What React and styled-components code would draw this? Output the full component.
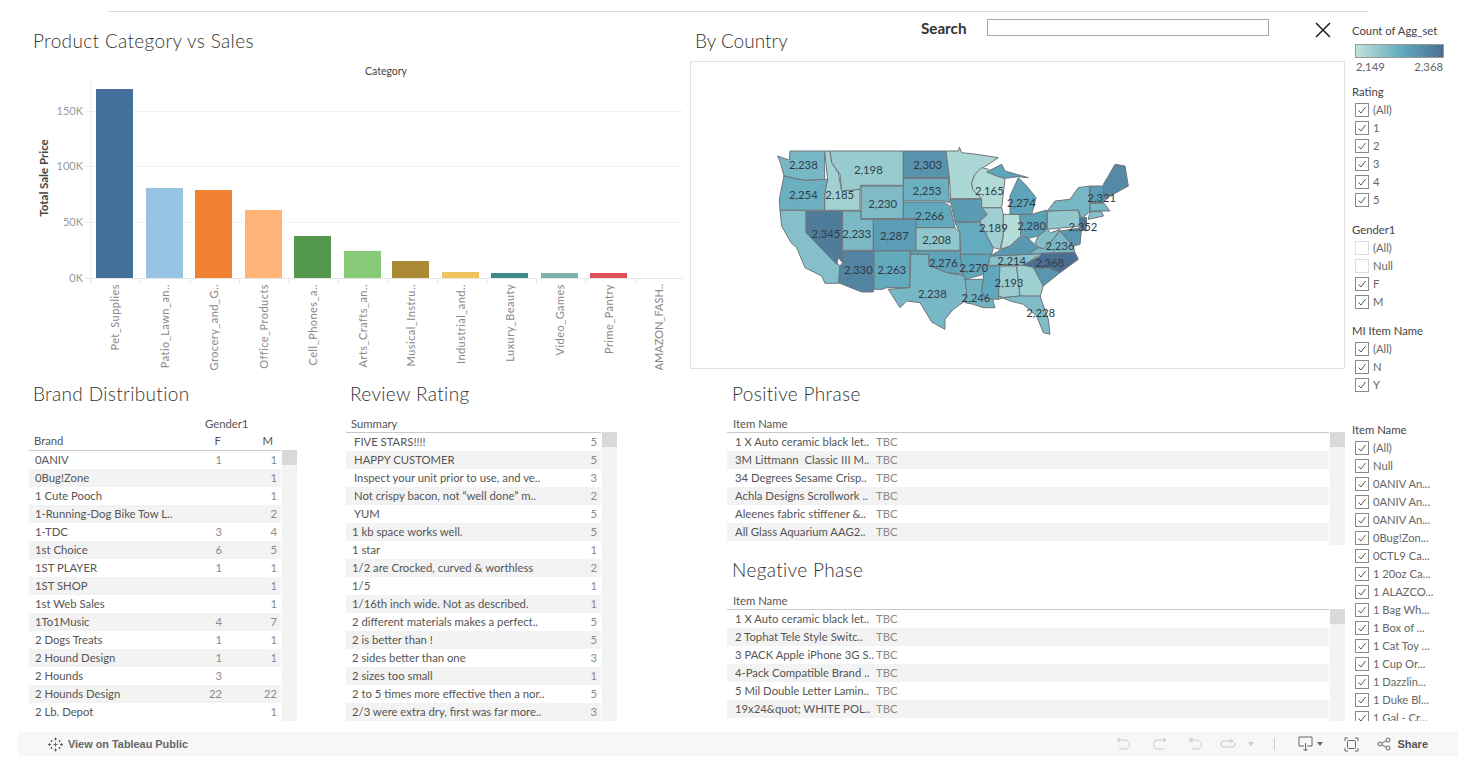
import React from 'react';
import styled, { createGlobalStyle } from 'styled-components';

const GlobalStyle = createGlobalStyle`
  html, body {
    margin: 0;
    padding: 0;
    background: #fff;
    overflow: hidden;
  }
  * { box-sizing: border-box; }
`;

const FONT = `Lato, "Open Sans", sans-serif`;

// page frame
const Page = styled.div`
  width: 1470px;
  height: 778px;
  padding-top: 11px;
  font-family: ${FONT};
  color: #555;
`;

const TopRule = styled.div`
  width: 1260px;
  height: 1px;
  margin-left: 108px;
  background: #dcdcdc;
`;

const Body = styled.div`
  display: flex;
  height: 709px;
`;

const Dashboard = styled.div`
  width: 1345px;
  display: flex;
  flex-direction: column;
`;

const TopRow = styled.div`
  display: flex;
  height: 368px;
`;

const BottomRow = styled.div`
  display: flex;
  height: 341px;
  padding-top: 1px;
  padding-left: 29px;
`;

// titles
const Title = styled.h2`
  margin: 0;
  padding-left: ${p => p.$indent || 0}px;
  font-size: 19px;
  line-height: 26px;
  font-weight: 300;
  letter-spacing: ${p => (p.$tight ? '0' : '0.35px')};
  color: #333;
  white-space: nowrap;
`;

// bar chart
const ChartPanel = styled.section`
  width: 690px;
  padding: 16px 0 0 33px;
`;

const ChartSvg = styled.svg`
  display: block;
  margin: 6px 0 0 -33px;
`;

const AxisTitle = styled.text`
  font-size: ${p => (p.$bold ? 11.5 : 10.5)}px;
  fill: #444;
  font-weight: ${p => (p.$bold ? 700 : 400)};
`;

const AxisTick = styled.text`
  font-size: 11px;
  fill: #999;
`;

const CategoryTick = styled.text`
  font-size: 11px;
  fill: #888;
  letter-spacing: ${p => (p.$tight ? '0' : '0.45px')};
`;

// map
const MapPanel = styled.section`
  width: 655px;
  display: flex;
  flex-direction: column;
`;

const MapHeader = styled.div`
  display: flex;
  height: 49px;
`;

const CountryHeading = styled.div`
  width: 231px;
  padding: 16px 0 0 5px;
`;

const SearchLabel = styled.label`
  width: 66px;
  margin-top: 8px;
  font-size: 15.2px;
  line-height: 17px;
  font-weight: 700;
  color: #333;
`;

const SearchInput = styled.div`
  width: 282px;
  height: 17px;
  margin-top: 7px;
  border: 1px solid #a8a8a8;
  background: #fff;
`;

const CloseButton = styled.button`
  display: flex;
  width: 16px;
  height: 16px;
  margin: 10px 0 0 46px;
  padding: 0;
  border: 0;
  background: none;
`;

const MapBox = styled.div`
  width: 655px;
  height: 308px;
  border: 1px solid #e2e2e2;
`;

const MapSvg = styled.svg`
  display: block;
  width: 100%;
  height: 100%;
`;

const StateShape = styled.polygon`
  stroke: #6e7478;
  stroke-width: 3;
  stroke-linejoin: round;
`;

const StateValue = styled.text`
  font-size: 34px;
  fill: #2f3b45;
  text-anchor: middle;
  dominant-baseline: central;
`;

// tables
const TablePanel = styled.section`
  width: ${p => p.$width}px;
  margin-left: ${p => p.$left || 0}px;
  flex: none;
`;

const HeaderBlock = styled.div`
  padding-top: ${p => p.$top || 9}px;
  font-size: 11.3px;
  line-height: 16px;
  color: #555;
`;

const HeaderRow = styled.div`
  display: flex;
  height: ${p => p.$height || 16}px;
  padding-left: ${p => p.$indent || 5}px;
  padding-top: ${p => p.$top || 0}px;
`;

const HeadName = styled.span`
  flex: 1;
`;

const HeadNum = styled.span`
  width: ${p => p.$width}px;
  text-align: ${p => p.$align || 'right'};
`;

const TableBody = styled.div`
  display: flex;
  height: ${p => p.$height}px;
`;

const RowList = styled.div`
  flex: 1;
  border-top: 1px solid #c9c9c9;
  margin-right: 1px;
`;

const Row = styled.div`
  display: flex;
  align-items: center;
  height: 18px;
  padding-left: ${p => p.$indent || 6}px;
  padding-bottom: 2px;
  font-size: 11.3px;
  color: #555;
  background: ${p => (p.$striped ? '#f3f3f3' : '#fff')};
  white-space: pre;
`;

const Name = styled.span`
  flex: ${p => (p.$width ? 'none' : 1)};
  width: ${p => (p.$width ? `${p.$width}px` : 'auto')};
`;

const Num = styled.span`
  width: ${p => p.$width}px;
  text-align: right;
  color: #8a8a8a;
`;

const Scrollbar = styled.div`
  width: 15px;
  height: 100%;
  flex: none;
  background: #f3f3f3;
`;

const ScrollThumb = styled.div`
  height: 15px;
  background: #d9d9d9;
`;

const PhraseBlock = styled.div`
  height: ${p => p.$height}px;
`;

// filters on the right
const Sidebar = styled.aside`
  width: 125px;
  padding: 11px 0 0 7px;
  overflow: hidden;
`;

const FilterTitle = styled.div`
  margin-top: ${p => p.$top || 0}px;
  margin-bottom: ${p => p.$bottom ?? 1}px;
  font-size: 11.3px;
  line-height: 16px;
  color: #444;
  white-space: nowrap;
`;

const LegendBar = styled.div`
  width: 89px;
  height: 14px;
  margin: 5px 0 0 3px;
  border: 1px solid #9a9a90;
  background: linear-gradient(to right, #bfe3dc, #5fa7bd 55%, #4b6f92);
`;

const LegendScale = styled.div`
  display: flex;
  justify-content: space-between;
  width: 89px;
  margin-left: 3px;
  padding: 0 1px;
  font-size: 11.3px;
  line-height: 17px;
  color: #666;
`;

const FilterList = styled.div`
  height: ${p => (p.$height ? `${p.$height}px` : 'auto')};
  overflow: hidden;
`;

const FilterRow = styled.div`
  display: flex;
  align-items: center;
  height: 18px;
  padding-left: 3px;
  padding-bottom: 1px;
  font-size: 11.2px;
  color: #666;
  white-space: nowrap;
`;

const Checkbox = styled.span`
  display: flex;
  width: 14px;
  height: 14px;
  margin-right: 4px;
  flex: none;
  border: 1px solid ${p => (p.$on ? '#8a8a8a' : '#dedede')};
  background: #fff;
`;

// bottom toolbar
const Toolbar = styled.footer`
  display: flex;
  align-items: center;
  width: 1440px;
  height: 24px;
  margin: 11px 0 0 18px;
  padding-left: 30px;
  background: #f7f7f7;
  font-family: "Liberation Sans", Arial, sans-serif;
  font-size: 11px;
  color: #555;
`;

const ToolbarLink = styled.span`
  margin-left: 5px;
  font-size: 10.9px;
  font-weight: 700;
  color: #666;
  white-space: nowrap;
`;

const ToolGroup = styled.div`
  display: flex;
  align-items: center;
  margin-left: auto;
  padding-right: 30px;
`;

const ToolIcon = styled.svg`
  display: block;
  flex: none;
  margin-left: ${p => p.$left || 0}px;
  fill: none;
  stroke: ${p => (p.$off ? '#c9c9c9' : '#666')};
  stroke-width: 1;
`;

const Caret = styled.span`
  width: 0;
  height: 0;
  margin-left: ${p => p.$left || 0}px;
  border-left: 3.5px solid transparent;
  border-right: 3.5px solid transparent;
  border-top: 4px solid ${p => (p.$off ? '#c9c9c9' : '#666')};
`;

const ToolDivider = styled.span`
  width: 1px;
  height: 12px;
  margin-left: 20px;
  background: #c9c9c9;
`;

const ShareLabel = styled.span`
  margin-left: 6px;
  font-weight: 700;
`;

// data
const BARS = [
  ['Pet_Supplies', 96, 89, '#456f9b'],
  ['Patio_Lawn_an..', 146, 188, '#97c4e3'],
  ['Grocery_and_G..', 195, 190, '#f08133'],
  ['Office_Products', 245, 210, '#ffb477'],
  ['Cell_Phones_a..', 294, 236, '#54984d'],
  ['Arts_Crafts_an..', 344, 251, '#87ca78'],
  ['Musical_Instru..', 392, 261, '#ab8a35'],
  ['Industrial_and..', 442, 272, '#f1c35f'],
  ['Luxury_Beauty', 491, 273, '#3f8a87'],
  ['Video_Games', 541, 273, '#7bb3ac'],
  ['Prime_Pantry', 590, 273, '#e0505a'],
  ['AMAZON_FASH..', 640, 278, 'none'],
];

const Y_TICKS = [['150K', 111], ['100K', 166], ['50K', 222], ['0K', 278]];

const STATES = [
  [2238, '263,470 285,478 298,482 300,455 404,455 404,540 345,543 310,537 282,530 272,492'],
  [2254, '282,530 310,537 345,543 413,540 405,580 404,633 270,633 268,600'],
  [2222, '270,633 348,633 348,700 450,800 450,845 445,852 405,852 395,830 345,805 320,745 303,730 275,680'],
  [2345, '348,635 458,635 458,790 445,775 440,795 348,700'],
  [2185, '404,455 420,455 425,490 445,520 450,550 455,575 510,570 510,633 404,633 405,580 413,540'],
  [2198, '420,455 640,455 640,558 512,558 510,570 455,575 450,525 425,490'],
  [2230, '513,560 640,560 640,658 513,658'],
  [2233, '458,635 512,635 513,660 550,660 550,753 458,753'],
  [2287, '550,660 678,660 678,755 550,755'],
  [2330, '458,755 550,755 550,878 515,878 445,850 450,800 458,790'],
  [2263, '552,755 660,755 660,865 590,865 578,870 552,870'],
  [2303, '640,455 768,455 778,535 640,535'],
  [2253, '640,537 775,537 778,610 760,605 640,605'],
  [2266, '640,608 760,608 780,620 795,685 678,685 678,658 640,658'],
  [2208, '678,685 795,685 810,700 810,753 678,753'],
  [2276, '662,755 812,755 820,825 770,820 716,798 716,765 662,765'],
  [2238, '662,765 716,765 716,798 770,820 825,830 830,880 825,905 790,930 765,960 765,990 725,968 690,910 650,905 630,925 595,870 660,865'],
  [2175, '768,455 805,455 808,443 815,460 860,465 925,475 880,505 855,525 845,550 848,570 875,598 782,598 778,535'],
  [2290, '780,600 875,600 893,640 870,668 795,668'],
  [2262, '795,670 870,668 880,690 910,745 905,765 812,765 810,700'],
  [2270, '810,765 905,765 882,825 825,840 820,825'],
  [2246, '825,840 880,840 875,875 885,898 905,890 915,925 880,925 850,915 825,910 830,880'],
  [2268, '882,800 930,800 925,900 885,898 875,875 880,840'],
  [2193, '930,800 980,800 990,890 940,895 925,900'],
  [2190, '980,798 1032,798 1060,860 1050,893 990,890'],
  [2228, '925,890 940,895 990,890 1050,890 1075,960 1080,1005 1060,1000 1040,950 1000,915 960,905'],
  [2214, '900,770 1015,765 1055,762 1000,798 895,798'],
  [2295, '932,752 960,740 992,710 1015,717 1045,745 1015,765 900,770'],
  [2189, '875,625 935,625 940,645 940,710 930,750 910,745 880,690 870,665 892,645'],
  [2160, '940,645 990,645 992,710 960,740 932,750 940,710'],
  [2165, '855,525 875,505 895,510 945,540 935,625 875,625 875,598 848,570 845,550'],
  [2274, '890,518 935,495 945,515 1015,535 985,532 945,537 920,530'],
  [2274, '960,625 960,590 985,535 1010,560 1038,595 1025,645 960,645'],
  [2280, '990,645 1025,645 1070,632 1072,690 1045,710 1015,717 992,705'],
  [2225, '1045,745 1035,730 1045,710 1072,690 1082,700 1110,690 1090,720 1060,748'],
  [2236, '1015,765 1045,745 1060,748 1090,720 1110,695 1150,740 1155,760 1055,762'],
  [2205, '1072,635 1165,632 1175,680 1072,690'],
  [2240, '1072,635 1095,605 1140,600 1165,565 1198,560 1200,635 1175,660 1165,632'],
  [2352, '1168,655 1190,655 1188,695 1170,690'],
  [2300, '1110,695 1175,685 1170,735 1150,740'],
  [2290, '1200,560 1240,560 1242,610 1200,610'],
  [2240, '1200,612 1242,612 1260,635 1200,635'],
  [2220, '1200,637 1235,637 1240,650 1195,660'],
  [2321, '1242,600 1240,555 1255,530 1275,495 1305,500 1315,560 1260,590'],
  [2300, '1030,805 1075,805 1110,820 1060,860'],
  [2368, '1000,798 1050,770 1055,762 1155,760 1165,780 1110,820 1075,805 1035,805'],
];

const STATE_LABELS = [
  ['2,238', 340, 495], ['2,198', 535, 510], ['2,303', 713, 495], ['2,254', 340, 587],
  ['2,185', 449, 585], ['2,253', 711, 573], ['2,165', 898, 573], ['2,230', 578, 612],
  ['2,266', 719, 650], ['2,274', 994, 609], ['2,321', 1235, 596], ['2,280', 1025, 679],
  ['2,189', 910, 684], ['2,352', 1179, 681], ['2,345', 408, 703], ['2,233', 500, 703],
  ['2,287', 613, 708], ['2,208', 740, 720], ['2,236', 1110, 738], ['2,276', 760, 790],
  ['2,214', 965, 785], ['2,368', 1079, 790], ['2,330', 505, 811], ['2,263', 605, 811],
  ['2,270', 851, 806], ['2,193', 957, 849], ['2,238', 727, 882], ['2,246', 858, 895],
  ['2,228', 1052, 941],
];

const BRANDS = [
  ['0ANIV', 1, 1], ['0Bug!Zone', '', 1], ['1 Cute Pooch', '', 1], ['1-Running-Dog Bike Tow L..', '', 2],
  ['1-TDC', 3, 4], ['1st Choice', 6, 5], ['1ST PLAYER', 1, 1], ['1ST SHOP', '', 1],
  ['1st Web Sales', '', 1], ['1To1Music', 4, 7], ['2 Dogs Treats', 1, 1], ['2 Hound Design', 1, 1],
  ['2 Hounds', 3, ''], ['2 Hounds Design', 22, 22], ['2 Lb. Depot', '', 1],
];

const REVIEWS = [
  ['FIVE STARS!!!!', 5, 8], ['HAPPY CUSTOMER', 5, 8], ['Inspect your unit prior to use, and ve..', 3, 8],
  ['Not crispy bacon, not \u201Cwell done\u201D m..', 2, 8], ['YUM', 5, 8], ['1 kb space works well.', 5],
  ['1 star', 1], ['1/2 are Crocked, curved & worthless', 2], ['1/5', 1],
  ['1/16th inch wide. Not as described.', 1], ['2 different materials makes a perfect..', 5],
  ['2 is better than !', 5], ['2 sides better than one', 3], ['2 sizes too small', 1],
  ['2 to 5 times more effective then a nor..', 5], ['2/3 were extra dry, first was far more..', 3],
];

const POSITIVE = [
  '1 X Auto ceramic black let..', '3M Littmann  Classic III M..', '34 Degrees Sesame Crisp..',
  'Achla Designs Scrollwork ..', 'Aleenes fabric stiffener &..', 'All Glass Aquarium AAG2..',
];

const NEGATIVE = [
  '1 X Auto ceramic black let..', '2 Tophat Tele Style Switc..', '3 PACK Apple iPhone 3G S..',
  '4-Pack Compatible Brand ..', '5 Mil Double Letter Lamin..', '19x24&quot; WHITE POL..',
];

const FILTERS = [
  { title: 'Rating', top: 9, items: ['(All)', '1', '2', '3', '4', '5'] },
  { title: 'Gender1', top: 13, items: ['(All)', 'Null', 'F', 'M'], off: ['(All)', 'Null'] },
  { title: 'MI Item Name', top: 12, items: ['(All)', 'N', 'Y'] },
  {
    title: 'Item Name',
    top: 28,
    height: 282,
    items: ['(All)', 'Null', '0ANIV An...', '0ANIV An...', '0ANIV An...', '0Bug!Zon...', '0CTL9 Ca...',
      '1 20oz Ca...', '1 ALAZCO...', '1 Bag Wh...', '1 Box of ...', '1 Cat Toy ...', '1 Cup Or...',
      '1 Dazzlin...', '1 Duke Bl...', '1 Gal - Cr...'],
  },
];

// legend colour for a count
const STOPS = [[191, 227, 220], [95, 167, 189], [75, 111, 146]];
const shade = v => {
  const t = (v - 2149) / (2368 - 2149);
  const [a, b, k] = t < 0.55 ? [STOPS[0], STOPS[1], t / 0.55] : [STOPS[1], STOPS[2], (t - 0.55) / 0.45];
  const c = a.map((n, i) => Math.round(n + (b[i] - n) * k));
  return `rgb(${c.join(',')})`;
};

const BarChart = () => (
  <ChartSvg width="690" height="310" viewBox="0 60 690 310">
    <AxisTitle x="386" y="75" textAnchor="middle">Category</AxisTitle>
    <AxisTitle $bold x="0" y="0" textAnchor="middle" transform="translate(48 178) rotate(-90)">Total Sale Price</AxisTitle>
    <line x1="91" x2="91" y1="79" y2="283" stroke="#ececec" />
    {Y_TICKS.map(([label, y]) => (
      <g key={label}>
        <line x1="85" x2="683" y1={y + 0.5} y2={y + 0.5} stroke={y === 278 ? '#e6e6e6' : '#f1f1f1'} />
        <AxisTick x="83" y={y + 4} textAnchor="end">{label}</AxisTick>
      </g>
    ))}
    {BARS.map(([label, x, top, color], i) => (
      <g key={label}>
        <line x1={91 + i * 49.5} x2={91 + i * 49.5} y1="278" y2="283" stroke="#e6e6e6" />
        {color !== 'none' && <rect x={x} y={top} width="37" height={278 - top} fill={color} />}
        <CategoryTick
          $tight={color === 'none'}
          textAnchor="end"
          transform={`translate(${x + 23} 284) rotate(-90)`}
        >
          {label}
        </CategoryTick>
      </g>
    ))}
  </ChartSvg>
);

const UsMap = () => (
  <MapSvg viewBox="3 188 1959 918" preserveAspectRatio="none">
    {STATES.map(([value, points], i) => (
      <StateShape key={i} points={points} fill={shade(value)} />
    ))}
    {STATE_LABELS.map(([label, x, y], i) => (
      <StateValue key={i} x={x} y={y}>{label}</StateValue>
    ))}
  </MapSvg>
);

const Check = () => (
  <svg width="12" height="12" viewBox="0 0 12 12" fill="none" stroke="#555" strokeWidth="1">
    <path d="M2.5 6.5 L5 9 L9.5 3" />
  </svg>
);

const Filter = ({ title, top, items, off = [], height }) => (
  <>
    <FilterTitle $top={top}>{title}</FilterTitle>
    <FilterList $height={height}>
      {items.map((item, i) => {
        const on = !off.includes(item);
        return (
          <FilterRow key={i}>
            <Checkbox $on={on}>{on && <Check />}</Checkbox>
            {item}
          </FilterRow>
        );
      })}
    </FilterList>
  </>
);

const ScrollTrack = () => (
  <Scrollbar>
    <ScrollThumb />
  </Scrollbar>
);

const PhraseTable = ({ title, rows, top, bodyHeight, blockHeight }) => (
  <PhraseBlock $height={blockHeight}>
    <Title $indent={5}>{title}</Title>
    <HeaderBlock $top={top}>
      <HeaderRow $indent={6}>Item Name</HeaderRow>
    </HeaderBlock>
    <TableBody $height={bodyHeight}>
      <RowList>
        {rows.map((name, i) => (
          <Row key={i} $striped={i % 2 === 1} $indent={8}>
            <Name $width={141}>{name}</Name>
            <Num $width={20}>TBC</Num>
          </Row>
        ))}
      </RowList>
      <ScrollTrack />
    </TableBody>
  </PhraseBlock>
);

export default function App() {
  return (
    <Page>
      <GlobalStyle />
      <TopRule />
      <Body>
        <Dashboard>
          <TopRow>
            <ChartPanel>
              <Title>Product Category vs Sales</Title>
              <BarChart />
            </ChartPanel>
            <MapPanel>
              <MapHeader>
                <CountryHeading>
                  <Title $tight>By Country</Title>
                </CountryHeading>
                <SearchLabel>Search</SearchLabel>
                <SearchInput />
                <CloseButton aria-label="Close">
                  <svg width="16" height="16" viewBox="0 0 16 16" stroke="#222" strokeWidth="1.5">
                    <path d="M1 1 L15 15 M15 1 L1 15" />
                  </svg>
                </CloseButton>
              </MapHeader>
              <MapBox>
                <UsMap />
              </MapBox>
            </MapPanel>
          </TopRow>
          <BottomRow>
            <TablePanel $width={268}>
              <Title $indent={4}>Brand Distribution</Title>
              <HeaderBlock>
                <HeaderRow>
                  <HeadName />
                  <HeadNum $width={55} $align="left">Gender1</HeadNum>
                  <HeadNum $width={37} />
                </HeaderRow>
                <HeaderRow $height={18} $top={1}>
                  <HeadName>Brand</HeadName>
                  <HeadNum $width={20}>F</HeadNum>
                  <HeadNum $width={52}>M</HeadNum>
                  <HeadNum $width={24} />
                </HeaderRow>
              </HeaderBlock>
              <TableBody $height={271}>
                <RowList>
                  {BRANDS.map(([name, f, m], i) => (
                    <Row key={i} $striped={i % 2 === 1}>
                      <Name>{name}</Name>
                      <Num $width={20}>{f}</Num>
                      <Num $width={55}>{m}</Num>
                      <Num $width={4} />
                    </Row>
                  ))}
                </RowList>
                <ScrollTrack />
              </TableBody>
            </TablePanel>
            <TablePanel $width={271} $left={49}>
              <Title $indent={4}>Review Rating</Title>
              <HeaderBlock>
                <HeaderRow>Summary</HeaderRow>
              </HeaderBlock>
              <TableBody $height={289}>
                <RowList>
                  {REVIEWS.map(([name, score, indent], i) => (
                    <Row key={i} $striped={i % 2 === 1} $indent={indent}>
                      <Name>{name}</Name>
                      <Num $width={20}>{score}</Num>
                      <Num $width={4} />
                    </Row>
                  ))}
                </RowList>
                <ScrollTrack />
              </TableBody>
            </TablePanel>
            <TablePanel $width={618} $left={110}>
              <PhraseTable title="Positive Phrase" rows={POSITIVE} bodyHeight={113} blockHeight={176} />
              <PhraseTable title="Negative Phase" rows={NEGATIVE} top={10} bodyHeight={112} blockHeight={164} />
            </TablePanel>
          </BottomRow>
        </Dashboard>
        <Sidebar>
          <FilterTitle $bottom={0}>Count of Agg_set</FilterTitle>
          <LegendBar />
          <LegendScale>
            <span>2,149</span>
            <span>2,368</span>
          </LegendScale>
          {FILTERS.map(f => (
            <Filter key={f.title} {...f} />
          ))}
        </Sidebar>
      </Body>
      <Toolbar>
        <ToolIcon width="15" height="15" viewBox="0 0 15 15">
          <path d="M7.5 0.5v3M6 2h3M7.5 11.5v3M6 13h3M1.5 6v3M0 7.5h3M13.5 6v3M12 7.5h3M7.5 5.5v4M5.5 7.5h4M3.5 3v2M2.5 4h2M11.5 3v2M10.5 4h2M3.5 10v2M2.5 11h2M11.5 10v2M10.5 11h2" />
        </ToolIcon>
        <ToolbarLink>View on Tableau Public</ToolbarLink>
        <ToolGroup>
          <ToolIcon $off width="15" height="15" viewBox="0 0 15 15">
            <path d="M1 3h8a4.5 4.5 0 0 1 0 9H3M1 3l3-2M1 3l3 2" />
          </ToolIcon>
          <ToolIcon $off $left={21} width="15" height="15" viewBox="0 0 15 15">
            <path d="M14 3H6a4.5 4.5 0 0 0 0 9h6M14 3l-3-2M14 3l-3 2" />
          </ToolIcon>
          <ToolIcon $off $left={21} width="15" height="15" viewBox="0 0 15 15">
            <path d="M2 1v4M2 3h7a4.5 4.5 0 0 1 0 9H4M2 3l3-2M2 3l3 2" />
          </ToolIcon>
          <ToolIcon $off $left={17} width="16" height="15" viewBox="0 0 16 15">
            <path d="M13 4H4a3 3 0 0 0 0 6h8a3 3 0 0 0 3-3V5M13 4l-3-2M13 4l-3 2" />
          </ToolIcon>
          <Caret $off $left={12} />
          <ToolDivider />
          <ToolIcon $left={23} width="15" height="16" viewBox="0 0 15 16">
            <path d="M6 10H1V1h13v9H9M7.5 7v8M5.5 13l2 2 2-2" />
          </ToolIcon>
          <Caret $left={4} />
          <ToolIcon $left={21} width="15" height="15" viewBox="0 0 15 15">
            <path d="M1 4V1h3M11 1h3v3M14 11v3h-3M4 14H1v-3" />
            <rect x="3.5" y="3.5" width="8" height="8" rx="1" />
          </ToolIcon>
          <ToolIcon $left={18} width="14" height="14" viewBox="0 0 14 14">
            <circle cx="3" cy="7" r="2" />
            <circle cx="11" cy="3" r="2" />
            <circle cx="11" cy="11" r="2" />
            <path d="M4.8 6.1l4.4-2.2M4.8 7.9l4.4 2.2" />
          </ToolIcon>
          <ShareLabel>Share</ShareLabel>
        </ToolGroup>
      </Toolbar>
    </Page>
  );
}
